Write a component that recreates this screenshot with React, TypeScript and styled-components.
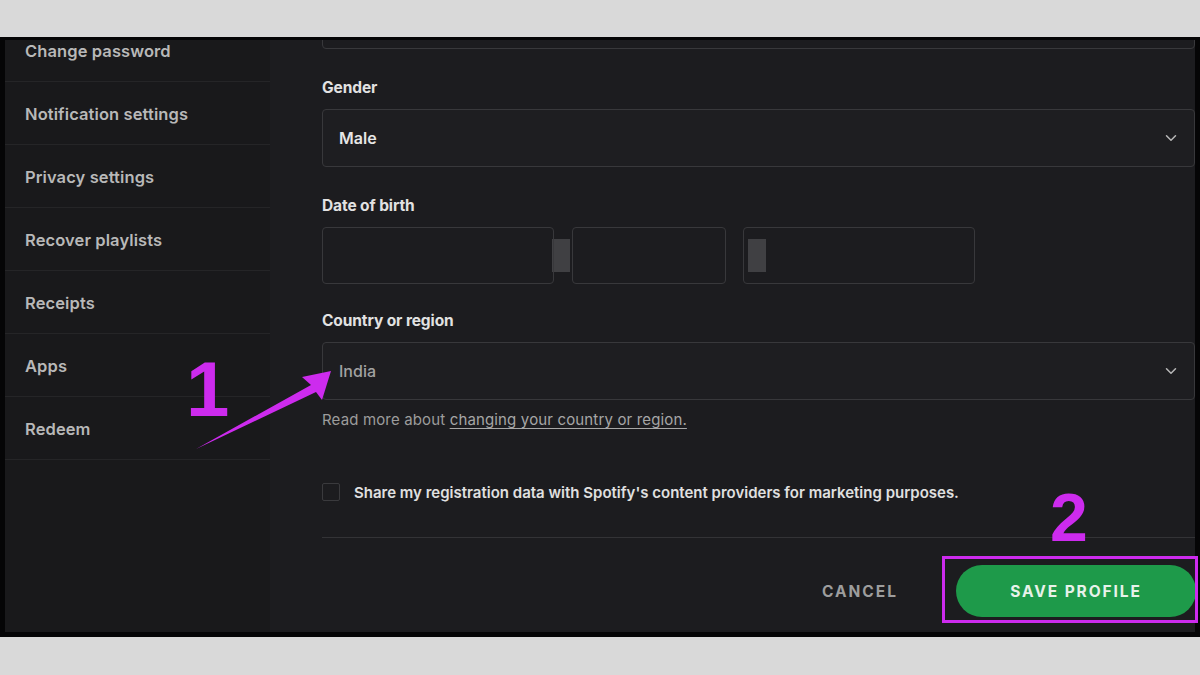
import React from "react";
import styled, { createGlobalStyle } from "styled-components";
import { ChevronDown } from "lucide-react";

const GlobalStyle = createGlobalStyle`
  html, body {
    margin: 0;
    padding: 0;
    background: #d9d9d9;
  }
  * {
    box-sizing: border-box;
  }
`;

const menu = [
  "Change password",
  "Notification settings",
  "Privacy settings",
  "Recover playlists",
  "Receipts",
  "Apps",
  "Redeem",
];

function App() {
  return (
    <StyledPage>
      <GlobalStyle />
      <StyledFrame>
        <StyledSidebar>
          <StyledMenu>
            {menu.map((item) => (
              <StyledMenuItem key={item}>{item}</StyledMenuItem>
            ))}
          </StyledMenu>
        </StyledSidebar>
        <StyledMain>
          <StyledCutInput />
          <StyledLabel>Gender</StyledLabel>
          <StyledSelect>
            <span>Male</span>
            <ChevronDown size={18} strokeWidth={2} />
          </StyledSelect>
          <StyledLabel>Date of birth</StyledLabel>
          <StyledDateRow>
            <StyledDateBox $width={232} />
            <StyledGrip />
            <StyledDateBox $width={154} />
            <StyledDateBox $width={232} $grip />
          </StyledDateRow>
          <StyledLabel $gap={28}>Country or region</StyledLabel>
          <StyledSelect $muted>
            <span>India</span>
            <ChevronDown size={18} strokeWidth={2} />
          </StyledSelect>
          <StyledHelp>
            Read more about <a>changing your country or region.</a>
          </StyledHelp>
          <StyledCheckRow>
            <StyledCheckbox />
            <span>
              Share my registration data with Spotify's content providers for
              marketing purposes.
            </span>
          </StyledCheckRow>
          <StyledDivider />
          <StyledActions>
            <StyledCancel>Cancel</StyledCancel>
            <StyledSave>Save profile</StyledSave>
          </StyledActions>
        </StyledMain>
      </StyledFrame>

      <StyledStepOne>1</StyledStepOne>
      <StyledArrow width="1200" height="675" viewBox="0 0 1200 675">
        <polygon points="196,449 311,385 302,377 331,371 322,400 316,392" />
      </StyledArrow>
      <StyledStepTwo>2</StyledStepTwo>
      <StyledHighlight />
    </StyledPage>
  );
}

export default App;

const magenta = "#cd2bee";

const StyledPage = styled.div`
  position: relative;
  width: 1200px;
  height: 675px;
  padding-top: 37px;
  overflow: hidden;
  font-family: Inter, "Liberation Sans", sans-serif;
`;

const StyledFrame = styled.div`
  width: 1200px;
  height: 600px;
  background: #050506;
  padding: 3px 5px 5px 5px;
  display: flex;
  overflow: hidden;
`;

const StyledSidebar = styled.div`
  width: 265px;
  height: 100%;
  background: #19191b;
  overflow: hidden;
`;

const StyledMenu = styled.ul`
  list-style: none;
  margin: -21px 0 0 0;
  padding: 0;
`;

const StyledMenuItem = styled.li`
  height: 63px;
  display: flex;
  align-items: center;
  padding: 1px 0 0 20px;
  border-bottom: 1px solid #252527;
  color: #b8b8b8;
  font-size: 16.5px;
  font-weight: 600;
  letter-spacing: 0.1px;
`;

const StyledMain = styled.div`
  flex: 1;
  height: 100%;
  background: #1c1c1f;
  padding-left: 52px;
  display: flex;
  flex-direction: column;
  overflow: hidden;
`;

const StyledCutInput = styled.div`
  height: 58px;
  margin-top: -49px;
  flex-shrink: 0;
  border: 1px solid #38383b;
  border-radius: 4px;
`;

const StyledLabel = styled.div<{ $gap?: number }>`
  margin-top: ${(p) => p.$gap ?? 30}px;
  height: 18px;
  line-height: 18px;
  font-size: 15.5px;
  font-weight: 700;
  color: #e2e2e2;
  letter-spacing: -0.1px;
`;

const StyledSelect = styled.div<{ $muted?: boolean }>`
  margin-top: 12px;
  height: 58px;
  flex-shrink: 0;
  border: 1px solid #38383b;
  border-radius: 4px;
  background: #1e1e21;
  display: flex;
  align-items: center;
  justify-content: space-between;
  padding: 0 14px 0 16px;
  font-size: 16px;
  font-weight: ${(p) => (p.$muted ? 500 : 600)};
  color: ${(p) => (p.$muted ? "#a2a2a2" : "#e6e6e6")};
  & svg {
    color: #b8b8b8;
  }
`;

const StyledDateRow = styled.div`
  margin-top: 12px;
  display: flex;
  align-items: center;
`;

const StyledDateBox = styled.div<{ $width: number; $grip?: boolean }>`
  position: relative;
  width: ${(p) => p.$width}px;
  height: 57px;
  border: 1px solid #38383b;
  border-radius: 4px;
  margin-right: ${(p) => (p.$grip ? 0 : 17)}px;
  &::before {
    content: "";
    display: ${(p) => (p.$grip ? "block" : "none")};
    position: absolute;
    left: 4px;
    top: 11px;
    width: 18px;
    height: 33px;
    background: #404043;
  }
`;

const StyledGrip = styled.div`
  width: 18px;
  height: 33px;
  margin: 0 2px 0 -19px;
  background: #404043;
`;

const StyledHelp = styled.div`
  margin-top: 11px;
  height: 18px;
  line-height: 18px;
  font-size: 15px;
  letter-spacing: 0.15px;
  color: #9c9c9c;
  & a {
    color: #a6a6a6;
    text-decoration: underline;
    text-underline-offset: 3px;
  }
`;

const StyledCheckRow = styled.div`
  margin-top: 53px;
  height: 20px;
  display: flex;
  align-items: center;
  gap: 14px;
  font-size: 15px;
  font-weight: 600;
  color: #e0e0e0;
  letter-spacing: 0;
`;

const StyledCheckbox = styled.div`
  width: 18px;
  height: 18px;
  border: 1px solid #3a3a3d;
  border-radius: 2px;
`;

const StyledDivider = styled.div`
  margin-top: 35px;
  height: 1px;
  flex-shrink: 0;
  background: #333336;
`;

const StyledActions = styled.div`
  margin-top: 27px;
  display: flex;
  align-items: center;
  justify-content: flex-end;
`;

const StyledCancel = styled.button`
  background: none;
  border: none;
  color: #9d9d9d;
  font-family: inherit;
  font-size: 15.5px;
  font-weight: 700;
  letter-spacing: 2px;
  text-transform: uppercase;
  margin-right: 52px;
`;

const StyledSave = styled.button`
  width: 240px;
  height: 52px;
  border: none;
  border-radius: 26px;
  background: #1e9a4a;
  color: #e8f2ea;
  font-family: inherit;
  font-size: 15.5px;
  font-weight: 700;
  letter-spacing: 1.9px;
  text-transform: uppercase;
  margin-right: -1px;
`;

const StyledStepOne = styled.div`
  position: absolute;
  left: 186px;
  top: 350px;
  font-family: "Liberation Sans", Arial, sans-serif;
  font-size: 78px;
  font-weight: 700;
  line-height: 1;
  color: ${magenta};
`;

const StyledStepTwo = styled.div`
  position: absolute;
  left: 1050px;
  top: 483px;
  font-family: "Liberation Sans", Arial, sans-serif;
  font-size: 68px;
  font-weight: 700;
  line-height: 1;
  color: ${magenta};
`;

const StyledArrow = styled.svg`
  position: absolute;
  left: 0;
  top: 0;
  pointer-events: none;
  & polygon {
    fill: ${magenta};
  }
`;

const StyledHighlight = styled.div`
  position: absolute;
  left: 942px;
  top: 556px;
  width: 256px;
  height: 67px;
  border: 3px solid ${magenta};
`;
